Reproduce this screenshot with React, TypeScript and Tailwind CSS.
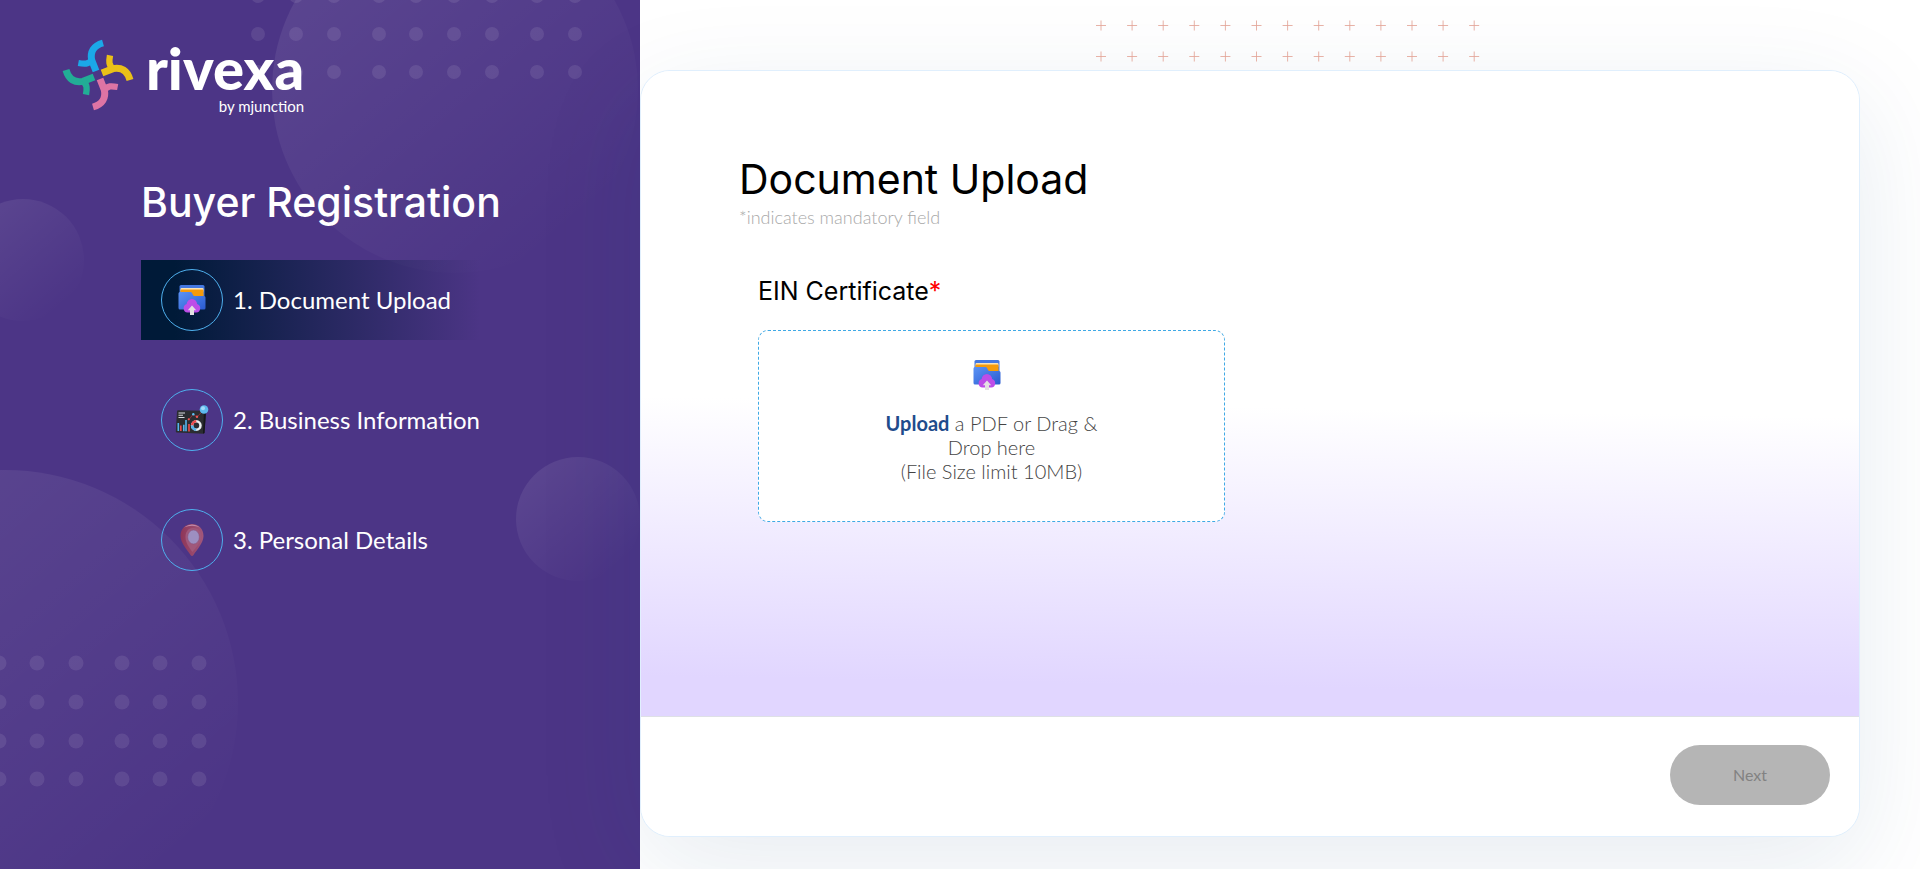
import React from "react";

function Logo() {
  return (
    <svg viewBox="66 57 216 216" className="size-[72px]" role="img" aria-label="rivexa">
      {[
        ["#1ba8e8", 0],
        ["#eac018", 90],
        ["#de74a4", 180],
        ["#22ad96", 270],
      ].map(([color, angle]) => (
        <g key={color} transform={`rotate(${angle} 174 165)`} stroke={color as string} fill="none">
          <path d="M189 69 C160 77 150 96 155 120 L168 153" strokeWidth="21" />
          <path d="M115 129 C132 132 146 134 156 118" strokeWidth="19" />
        </g>
      ))}
    </svg>
  );
}

function FolderIcon({ id }: { id: string }) {
  return (
    <svg viewBox="0 0 28 32" className="h-8 w-7" aria-hidden="true">
      <defs>
        <linearGradient id={id} x1="0" y1="0" x2="1" y2="1">
          <stop offset="0" stopColor="#5b93f5" />
          <stop offset="1" stopColor="#2a5bd0" />
        </linearGradient>
      </defs>
      <rect x="1.5" y="1" width="25" height="20" rx="1.5" fill="#4478e0" />
      <rect x="2.5" y="4" width="23" height="4" rx="1" fill="#fbe3b4" />
      <rect x="2.5" y="5.5" width="23" height="10" rx="1" fill="#f59b0a" />
      <path d="M0.5 9.5q0-1.500 1.500-1.500H12.500q1 0 1.500 1l1 2q.5 1 1.500 1H26q1.500 0 1.500 1.500V24q0 1.500-1.500 1.500H2q-1.500 0-1.500-1.500Z" fill={`url(#${id})`} />
      <path d="M9.500 28.500a4.300 4.300 0 0 1-.8-8.400 5.200 5.200 0 0 1 10.400 0 4.300 4.300 0 0 1-.8 8.400Z" fill="#bd4de8" />
      <path d="M14 21.500 18.200 26.300H16V31H12V26.300H9.800Z" fill="#e4e0e2" />
    </svg>
  );
}

function ReportIcon() {
  return (
    <svg viewBox="0 0 34 30" className="h-[30px] w-[34px]" aria-hidden="true">
      <path d="M2 6.500q0-1.200 1.200-1.200L30 5.700q1 0 1 1l-1.500 21q0 1-1 1L1.800 27.500q-1 0-1-1Z" fill="#2b2d31" />
      <path d="M29 6l2 1-1.500 21-1.500.5Z" fill="#15161a" />
      <path d="M3.500 8h6.500M3.500 10.300h4.500M3.500 12.500h6" stroke="#d9dcdf" strokeWidth="1.100" />
      <path d="M3.300 26v-8M8.800 26.300v-6.500M11 26.300V15" stroke="#55b5ee" strokeWidth="1.600" />
      <path d="M5.800 26V20.500M14 26.500V19" stroke="#f04c4c" strokeWidth="1.600" />
      <path d="M14 14.500 18 9.500 22 12 29 4.500" stroke="#8b3038" strokeWidth="1" fill="none" />
      <circle cx="18.300" cy="9.300" r="1.200" fill="#5fc0f5" />
      <circle cx="22" cy="11.800" r="1.200" fill="#f05555" />
      <circle cx="13.800" cy="14.300" r="1.100" fill="#f05555" />
      <circle cx="21.300" cy="20.500" r="4.200" fill="none" stroke="#eceff1" strokeWidth="2.500" />
      <path d="M17.100 20.500a4.200 4.200 0 0 1 4.200-4.200" fill="none" stroke="#ee4a4a" strokeWidth="2.500" />
      <path d="M21.300 24.700a4.200 4.200 0 0 1-4.200-4.200" fill="none" stroke="#56b4ea" strokeWidth="2.500" />
      <circle cx="29" cy="4.500" r="4.300" fill="#5db9ee" />
      <circle cx="28" cy="3.300" r="2" fill="#a2dcf8" />
    </svg>
  );
}

function PinIcon() {
  return (
    <svg viewBox="0 0 24 32" className="h-8 w-6" aria-hidden="true">
      <defs>
        <linearGradient id="pin" x1="0" y1="0" x2="1" y2="0">
          <stop offset="0" stopColor="#8d3558" />
          <stop offset="1" stopColor="#a2587b" />
        </linearGradient>
      </defs>
      <path d="M12 0C5 0 .5 5 .5 12c0 7 7 14 10 19q1.500 2 3 0c3-5 10-12 10-19C23.500 5 19 0 12 0Z" fill="url(#pin)" />
      <path d="M4 3.500Q12-2.500 20 3.500 12 0 4 3.500Z" fill="#c08bac" />
      <path d="M13 4C8 4 5.500 8 5.500 13c0 6 4 11 7 15 3-4 9-10 9-16C21.500 7 18 4 13 4Z" fill="#a0587b" />
      <ellipse cx="13.500" cy="13" rx="5.800" ry="7" fill="#9d8fc1" stroke="#86527f" strokeWidth=".5" />
    </svg>
  );
}

const dotColumns = [258, 296, 334, 379, 416, 454, 492, 537, 575];
const lowerColumns = [-1, 37, 76, 122, 160, 199];

function PanelArt() {
  return (
    <svg className="absolute inset-0 h-full w-full" aria-hidden="true">
      <defs>
        <linearGradient id="disc" x1="0.150" y1="0.150" x2="0.800" y2="0.900">
          <stop offset="0" stopColor="#fff" stopOpacity=".08" />
          <stop offset="1" stopColor="#fff" stopOpacity="0" />
        </linearGradient>
      </defs>
      <circle cx="455" cy="90" r="183" fill="url(#disc)" />
      <circle cx="23" cy="260" r="61" fill="url(#disc)" />
      <circle cx="5" cy="703" r="233" fill="url(#disc)" />
      <circle cx="578" cy="519" r="62" fill="url(#disc)" />
      <g fill="#fff" fillOpacity=".09">
        {[-4, 34, 72].map((y) => dotColumns.map((x) => <circle key={`${x}-${y}`} cx={x} cy={y} r="7" />))}
        {[663, 702, 741, 779].map((y) => lowerColumns.map((x) => <circle key={`${x}-${y}`} cx={x} cy={y} r="7.500" />))}
      </g>
    </svg>
  );
}

function CrossPattern() {
  const columns = Array.from({ length: 13 }, (_, i) => 5 + i * 31.1);
  return (
    <svg viewBox="0 0 384 42" className="absolute left-[456px] top-[20px] h-[42px] w-[384px]" aria-hidden="true">
      {[5.5, 36.5].map((y) =>
        columns.map((x) => (
          <path key={`${x}-${y}`} d={`M${x - 5} ${y}h10M${x} ${y - 5}v10`} stroke="#e3a498" strokeOpacity=".85" />
        )),
      )}
    </svg>
  );
}

const steps = [
  { label: "1. Document Upload", icon: <FolderIcon id="folder-step" />, active: true },
  { label: "2. Business Information", icon: <ReportIcon />, active: false },
  { label: "3. Personal Details", icon: <PinIcon />, active: false },
];

export default function App() {
  return (
    <div className="flex min-h-screen overflow-hidden bg-white font-['Lato',sans-serif]">
      <aside className="relative w-1/3 shrink-0 overflow-hidden bg-[#4c3586] text-white">
        <PanelArt />
        <div className="relative">
          <header className="flex items-start gap-3 pl-[62px] pt-[39px]">
            <Logo />
            <div className="flex flex-col items-end">
              <span className="text-[58px] font-black leading-[58px]">rivexa</span>
              <span className="text-[15px] leading-[18px]">by mjunction</span>
            </div>
          </header>
          <div className="pl-[141px] pt-[63px]">
            <h1 className="font-['Inter',sans-serif] text-[41px] font-medium leading-[48px]">Buyer Registration</h1>
            <ol className="mt-[34px] flex max-w-[340px] flex-col gap-10">
              {steps.map((step) => (
                <li
                  key={step.label}
                  aria-current={step.active ? "step" : undefined}
                  className={
                    step.active
                      ? "flex h-20 items-center gap-2.5 bg-linear-to-r from-[#001a38] from-10% to-transparent pl-5"
                      : "flex h-20 items-center gap-2.5 pl-5"
                  }
                >
                  <span className="flex size-[62px] shrink-0 items-center justify-center rounded-full border border-[#4fb0ee]">
                    {step.icon}
                  </span>
                  <span className="whitespace-nowrap text-2xl leading-8">{step.label}</span>
                </li>
              ))}
            </ol>
          </div>
        </div>
      </aside>

      <main className="relative flex flex-1 flex-col pb-8 pr-[60px] pt-[70px]">
        <section className="relative flex flex-1 flex-col rounded-[30px] border border-[#e0effd] bg-white shadow-[0_30px_110px_rgba(20,70,120,0.1)]">
          <div className="flex-1 rounded-t-[30px] bg-[linear-gradient(181deg,#ffffff_52%,#e1d6ff_94%)] px-[98px] pt-[84px]">
            <h2 className="font-['Inter',sans-serif] text-[41px] leading-[48px] text-black">Document Upload</h2>
            <p className="text-lg font-light leading-7 text-[#a8a8a8]">*indicates mandatory field</p>
            <div className="px-[19px] pt-[42px]">
              <label htmlFor="ein" className="block font-['Inter',sans-serif] text-[25px] leading-9 text-black">
                EIN Certificate<span className="text-[#ff0000]">*</span>
              </label>
              <label
                htmlFor="ein"
                className="mt-[21px] flex h-[192px] max-w-[467px] cursor-pointer flex-col items-center rounded-[10px] border border-dashed border-[#3fa9e5] bg-white pt-7"
              >
                <input id="ein" type="file" accept="application/pdf" className="sr-only" />
                <span className="pr-2">
                  <FolderIcon id="folder-drop" />
                </span>
                <span className="mt-5 text-center text-xl font-light leading-6 text-[#444444]">
                  <span className="font-bold text-[#1f4c8c]">Upload</span> a PDF or Drag &amp;
                  <br />
                  Drop here
                  <br />
                  (File Size limit 10MB)
                </span>
              </label>
            </div>
          </div>
          <footer className="flex h-[120px] items-start justify-end rounded-b-[30px] border-t border-[#dee0e6] bg-white pr-[29px] pt-7">
            <button type="button" disabled className="h-[60px] w-40 rounded-full bg-[#b5b5b5] text-base text-[#828282]">
              Next
            </button>
          </footer>
        </section>
        <CrossPattern />
      </main>
    </div>
  );
}
